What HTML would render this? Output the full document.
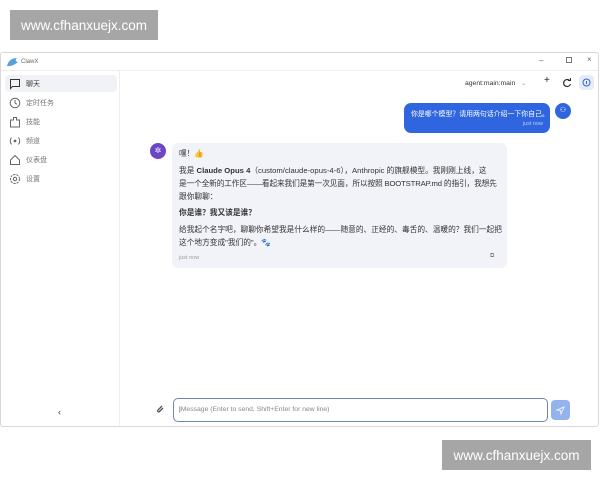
<!DOCTYPE html>
<html><head><meta charset="utf-8"><style>
*{box-sizing:border-box;margin:0;padding:0}
body{width:600px;height:480px;background:#fff;font-family:"Liberation Sans","Noto Sans CJK SC",sans-serif;position:relative;overflow:hidden;color:#222}
.wm{position:absolute;background:#a6a6a6;color:#fff;font-size:13.5px;display:flex;align-items:center;justify-content:center}
.win{position:absolute;left:0;top:52px;width:599px;height:375px;border:1px solid #d8d8d8;border-radius:3px;background:#fff}
.title{height:18px;border-bottom:1px solid #eee;font-size:6px;color:#666;display:flex;align-items:center;padding-left:20px;position:relative}
.side{position:absolute;left:0;top:18px;width:119px;bottom:0;border-right:1px solid #eee}
.item{position:absolute;left:4px;width:112px;height:17px;border-radius:4px;font-size:7px;color:#777;display:flex;align-items:center;padding-left:21px}
.item svg{position:absolute;left:4px;top:2.5px}
.abs{position:absolute}
.bub{position:absolute;left:171px;top:90px;width:335px;height:125px;background:#f1f3f8;border-radius:6px;font-size:7.7px;color:#333;padding:0 8px}
.bub p{position:absolute;left:7px;white-space:nowrap;line-height:10px}
</style></head><body>
<div class="wm" style="left:10px;top:10px;width:148px;height:30px">www.cfhanxuejx.com</div>
<div class="wm" style="left:442px;top:440px;width:149px;height:30px">www.cfhanxuejx.com</div>
<div class="win">
 <div class="title">
  <svg class="abs" style="left:5px;top:3px" width="13" height="12"><path d="M1 10 Q3 2 11 2 Q8 5 12 6 Q6 11 1 10Z" fill="#5aa0d8"/></svg>ClawX
  <span class="abs" style="left:538px;top:3px;font-size:8px;color:#666">–</span>
  <span class="abs" style="left:565px;top:4px;width:6px;height:6px;border:1px solid #777"></span>
  <span class="abs" style="left:586px;top:2px;font-size:8px;color:#666">×</span>
 </div>
 <div class="side">
  <div class="item" style="top:4px;background:#f1f2f5;color:#333"><svg width="12" height="12"><path d="M1.5 1.5h9v7H3.5l-2 2Z" fill="none" stroke="#333" stroke-width="1"/></svg>聊天</div>
  <div class="item" style="top:23px"><svg width="12" height="12"><circle cx="6" cy="6" r="4.8" fill="none" stroke="#666"/><path d="M6 3V6l2 1.3" stroke="#666" fill="none"/></svg>定时任务</div>
  <div class="item" style="top:42px"><svg width="12" height="12"><path d="M1.5 4h3V1.5h3V4h3v7h-9Z" fill="none" stroke="#666"/></svg>技能</div>
  <div class="item" style="top:61px"><svg width="12" height="12"><circle cx="6" cy="6" r="1.4" fill="#666"/><path d="M2.5 2.5Q0 6 2.5 9.5M9.5 2.5Q12 6 9.5 9.5" stroke="#666" fill="none"/></svg>频道</div>
  <div class="item" style="top:80px"><svg width="12" height="12"><path d="M1.5 6L6 1.5l4.5 4.5v4.5h-9Z" fill="none" stroke="#666"/></svg>仪表盘</div>
  <div class="item" style="top:99px"><svg width="12" height="12"><circle cx="6" cy="6" r="4.5" fill="none" stroke="#666" stroke-dasharray="2.2 1"/><circle cx="6" cy="6" r="1.7" fill="none" stroke="#666"/></svg>设置</div>
  <span class="abs" style="left:57px;top:336px;font-size:9px;color:#444">‹</span>
 </div>
 <div class="abs" style="left:461px;top:22px;width:76px;height:16px;font-size:6.8px;color:#333;display:flex;align-items:center;padding-left:3px">agent:main:main <span style="color:#999;margin-left:6px;font-size:6px">⌄</span></div>
 <span class="abs" style="left:543px;top:22px;font-size:10px;color:#222">+</span>
 <svg class="abs" style="left:561px;top:25px" width="10" height="10"><path d="M8 3A3.5 3.5 0 1 0 8.5 6" stroke="#333" fill="none" stroke-width="1.2"/><path d="M6 2.5h2.5V0" stroke="#333" fill="none"/></svg>
 <div class="abs" style="left:578px;top:22px;width:15px;height:15px;border-radius:4px;background:#e5ecf8"><svg width="15" height="15"><circle cx="7.5" cy="7.5" r="3.5" fill="none" stroke="#3466c8"/><path d="M7.5 6v3" stroke="#3466c8"/></svg></div>
 <div class="abs" style="left:403px;top:50px;width:146px;height:30px;background:#2f66e0;border-radius:7px;color:#fff;font-size:6.9px;padding:5px 7px;white-space:nowrap">你是哪个模型？请用两句话介绍一下你自己。<div style="text-align:right;font-size:5.5px;color:#b9ccf5;margin-top:3px">just now</div></div>
 <div class="abs" style="left:554px;top:50px;width:16px;height:16px;border-radius:50%;background:#2f66e0;color:#fff;font-size:7px;text-align:center;line-height:16px">⚇</div>
 <div class="abs" style="left:149px;top:90px;width:16px;height:16px;border-radius:50%;background:#6b46c9;color:#fff;font-size:8px;text-align:center;line-height:16px">✲</div>
 <div class="bub">
  <p style="top:6px">嘿！👍</p>
  <p style="top:23px">我是 <b>Claude Opus 4</b>（custom/claude-opus-4-6），Anthropic 的旗舰模型。我刚刚上线，这</p>
  <p style="top:36px;letter-spacing:-0.15px">是一个全新的工作区——看起来我们是第一次见面，所以按照 BOOTSTRAP.md 的指引，我想先</p>
  <p style="top:49px">跟你聊聊：</p>
  <p style="top:65px;font-weight:bold">你是谁？我又该是谁？</p>
  <p style="top:82px">给我起个名字吧，聊聊你希望我是什么样的——随意的、正经的、毒舌的、温暖的？我们一起把</p>
  <p style="top:95px">这个地方变成"我们的"。🐾</p>
  <p style="top:110px;font-size:5.5px;color:#999">just now</p>
  <span class="abs" style="left:318px;top:110px;font-size:6px;color:#777">⧉</span>
 </div>
 <svg class="abs" style="left:155px;top:351px" width="9" height="10"><path d="M6 2L2 6Q1 8 3 8L7 4" stroke="#555" fill="none" stroke-width="1.3"/></svg>
 <div class="abs" style="left:172px;top:345px;width:375px;height:24px;border:1.5px solid #6d86b8;border-radius:5px;font-size:6.8px;color:#888;padding:6px 5px;line-height:10px"><span style="color:#333">|</span>Message (Enter to send, Shift+Enter for new line)</div>
 <div class="abs" style="left:550px;top:347px;width:19px;height:20px;border-radius:4px;background:#94b3ee"><svg width="19" height="20"><path d="M6 10L13 7L10 14L9.5 10.5Z" fill="none" stroke="#fff" stroke-width="0.8"/></svg></div>
</div>
</body></html>
